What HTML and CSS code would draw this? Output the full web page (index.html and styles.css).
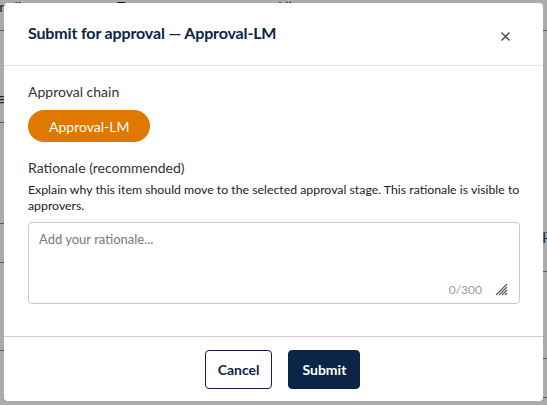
FILE: index.html
```html
<!DOCTYPE html>
<html>
<head>
<meta charset="utf-8">
<link rel="stylesheet" href="styles.css">
</head>
<body>
<div class="backdrop">
  <div class="bg-table">
    <span class="bg-text c1">Compliance</span>
    <span class="bg-text c2">Treatment</span>
    <span class="bg-text c3">History</span>
    <div class="bg-col bg-left">
      <div class="bg-row" style="height:31px"></div>
      <div class="bg-row" style="height:92px"></div>
      <div class="bg-row" style="height:101px"></div>
      <div class="bg-row" style="height:39px"></div>
      <div class="bg-row" style="height:88px"></div>
    </div>
    <div class="bg-col bg-right">
      <div class="bg-row" style="height:31px"></div>
      <div class="bg-row" style="height:202px"></div>
      <div class="bg-row" style="height:39px"></div>
      <div class="bg-row" style="height:87px"></div>
      <div class="bg-row" style="height:39px"></div>
    </div>
    <span class="bg-menu">≡</span>
    <span class="bg-h">H</span>
  </div>
  <div class="overlay"></div>
  <div class="modal">
    <div class="modal-header">
      <h2 class="modal-title">Submit for approval — Approval-LM</h2>
      <button class="close-btn" aria-label="Close">
        <svg width="9" height="9" viewBox="0 0 9 9"><path d="M1 1L8 8M8 1L1 8" stroke="#4a5262" stroke-width="1.6" stroke-linecap="round"/></svg>
      </button>
    </div>
    <div class="modal-body">
      <div class="label">Approval chain</div>
      <div class="chip-row"><span class="chip">Approval-LM</span></div>
      <div class="label">Rationale (recommended)</div>
      <p class="help">Explain why this item should move to the selected approval stage. This rationale is visible to approvers.</p>
      <div class="textarea">
        <span class="placeholder">Add your rationale...</span>
        <div class="ta-foot">
          <span class="counter">0/300</span>
          <svg class="grip" width="13" height="13" viewBox="0 0 13 13"><path d="M12 1L1 12M12 4L4 12M12 7L7 12M12 10L10 12" stroke="#5e5e5e" stroke-width="1.2"/></svg>
        </div>
      </div>
    </div>
    <div class="modal-footer">
      <button class="btn btn-outline">Cancel</button>
      <button class="btn btn-primary">Submit</button>
    </div>
  </div>
</div>
</body>
</html>
```
FILE: styles.css
```css
* { box-sizing: border-box; }
html, body { margin: 0; padding: 0; }
body {
  width: 547px;
  height: 405px;
  overflow: hidden;
  font-family: Lato, "Liberation Sans", sans-serif;
  background: #fff;
}
.backdrop {
  position: relative;
  width: 547px;
  height: 405px;
  overflow: hidden;
}
.bg-table {
  position: absolute;
  inset: 0;
  color: #222;
  font-size: 14px;
}
.bg-text {
  position: absolute;
  top: 0;
  line-height: 14px;
  white-space: nowrap;
}
.c1 { left: -22px; }
.c2 { left: 117px; }
.c3 { left: 278px; }
.bg-col {
  position: absolute;
  top: 0;
  width: 6px;
  display: flex;
  flex-direction: column;
}
.bg-left { left: 0; }
.bg-right { right: 0; }
.bg-row { border-bottom: 1px solid #888; flex: none; }
.bg-menu {
  position: absolute;
  left: -4px;
  top: 88px;
  font-size: 18px;
  color: #333;
}
.bg-h {
  position: absolute;
  right: -6px;
  top: 229px;
  font-size: 14px;
  color: #333;
}
.overlay {
  position: absolute;
  inset: 0;
  background: rgba(0, 0, 0, 0.33);
}
.modal {
  position: absolute;
  left: 4px;
  top: 3px;
  width: 539px;
  height: 398px;
  background: #fff;
  border-radius: 4px;
  display: flex;
  flex-direction: column;
}
.modal-header {
  height: 63px;
  flex: none;
  display: flex;
  align-items: center;
  justify-content: space-between;
  padding: 0 33px 0 24px;
  border-bottom: 1px solid #e4e4e4;
}
.modal-title {
  margin: 0;
  font-size: 16px;
  font-weight: 700;
  color: #0b2447;
  letter-spacing: -0.15px;
  position: relative;
  top: -2px;
}
.close-btn {
  border: 0;
  background: none;
  padding: 0;
  width: 9px;
  height: 9px;
  display: flex;
  align-items: center;
  justify-content: center;
  margin-top: 4px;
}
.modal-body {
  flex: 1;
  padding: 17px 23px 0 24px;
  border-bottom: 1px solid #cfcfcf;
}
.label {
  font-size: 14px;
  color: #333;
  line-height: 18px;
}
.chip-row {
  margin: 9px 0 17px;
  display: flex;
}
.chip {
  display: inline-flex;
  align-items: center;
  justify-content: center;
  height: 32px;
  padding: 0 21px;
  border-radius: 16px;
  background: #e07800;
  color: #fff;
  font-size: 14px;
}
.help {
  margin: 5px 0 8px;
  font-size: 12.3px;
  line-height: 16px;
  color: #222;
}
.textarea {
  height: 82px;
  border: 1px solid #c8c8c8;
  border-radius: 4px;
  padding: 8px 11px 6px 10px;
  display: flex;
  flex-direction: column;
  justify-content: space-between;
}
.placeholder {
  font-size: 13px;
  color: #7a7a7a;
}
.ta-foot {
  display: flex;
  justify-content: flex-end;
  align-items: center;
  gap: 13px;
}
.counter {
  font-size: 12px;
  color: #9a9aa6;
}
.modal-footer {
  flex: none;
  height: 64px;
  display: flex;
  justify-content: center;
  align-items: center;
  gap: 16px;
  padding-left: 18px;
}
.btn {
  height: 39px;
  border-radius: 4px;
  font-family: Lato, "Liberation Sans", sans-serif;
  font-size: 14px;
  font-weight: 700;
  padding: 0 12px;
}
.btn-outline {
  background: #fff;
  border: 1px solid #0b2447;
  color: #0b2447;
}
.btn-primary {
  background: #0b2447;
  border: 1px solid #0b2447;
  color: #fff;
  padding: 0 13px;
}
```
